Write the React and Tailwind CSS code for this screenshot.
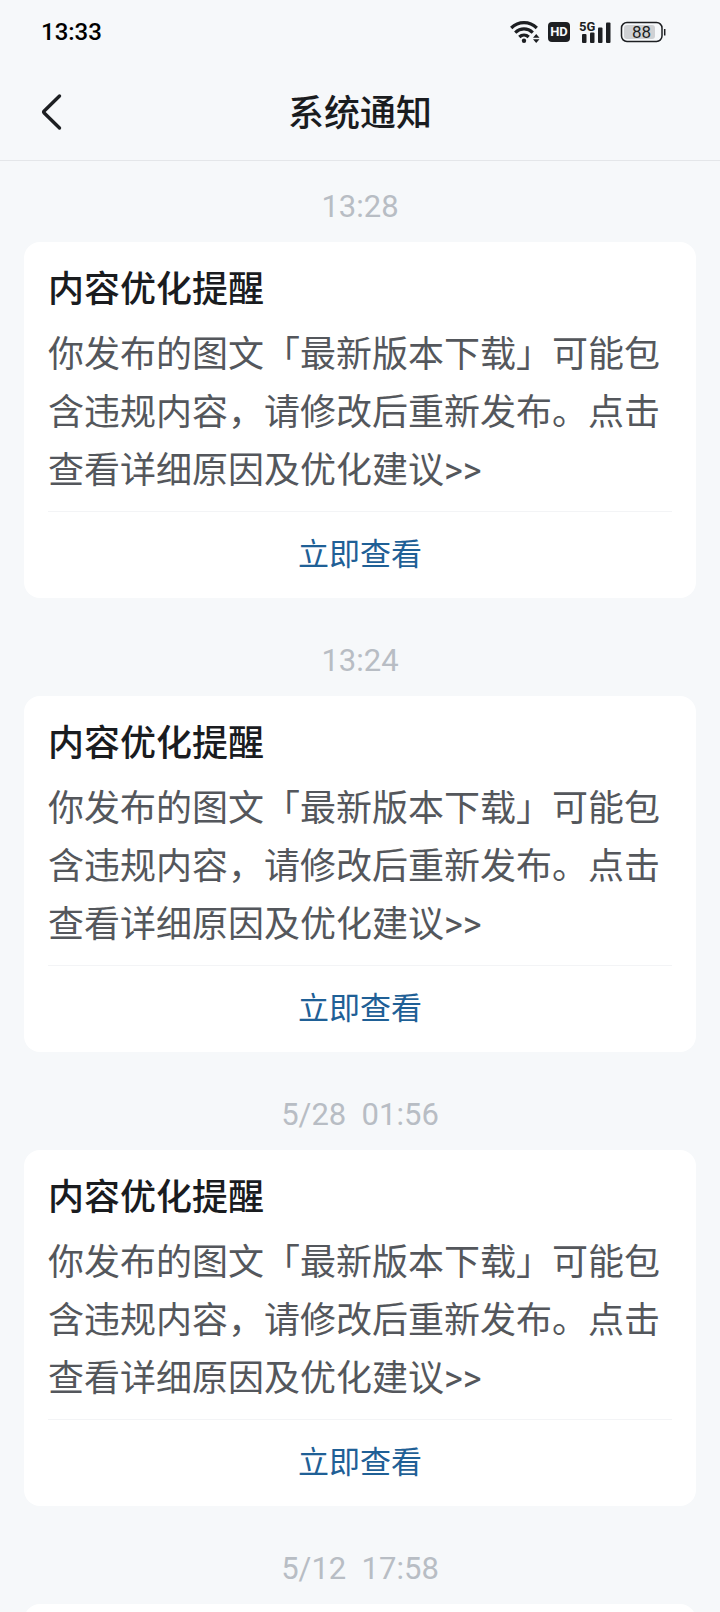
import React from 'react';

const detail = {
  title: '内容优化提醒',
  body: '你发布的图文「最新版本下载」可能包含违规内容，请修改后重新发布。点击查看详细原因及优化建议>>',
  action: '立即查看',
};

const notices = [
  { id: 1, time: '13:28', detail },
  { id: 2, time: '13:24', detail },
  { id: 3, time: '5/28  01:56', detail },
  { id: 4, time: '5/12  17:58', detail: null },
];

const WifiIcon = () => (
  <svg className="w-[30px] h-6" viewBox="0 0 30 24" fill="none" aria-hidden="true">
    <g stroke="#1d1f22" strokeWidth="3.2">
      <path d="M1.200 8C8.500 0.800 19.500 0.800 26.800 8" />
      <path d="M5.200 12.600C10.500 7.600 17.500 7.600 22.800 12.600" />
      <path d="M9.300 17C12 14.400 16 14.400 18.700 17" />
    </g>
    <circle cx="14" cy="20.700" r="2.200" fill="#1d1f22" />
    <path d="M23 17.700L26.200 14L29.500 17.700ZM23 19.200L26.200 22.900L29.500 19.200Z" fill="#1d1f22" />
  </svg>
);

const HdIcon = () => (
  <span className="flex items-center justify-center w-[22px] h-5 rounded bg-[#1d1f22] text-[#f6f8fa] text-[13px] leading-5 font-bold">
    HD
  </span>
);

const SignalIcon = () => (
  <svg className="w-[34px] h-8" viewBox="0 -4 34 32" aria-hidden="true">
    <g fill="#1d1f22">
      <text x="1" y="11" fontSize="13" fontWeight="700">5G</text>
      <rect x="4" y="14" width="4.500" height="9" rx="1" />
      <rect x="12" y="12.500" width="4.500" height="10.500" rx="1" />
      <rect x="20" y="7.500" width="4.500" height="15.500" rx="1" />
      <rect x="28" y="2.500" width="4.500" height="20.500" rx="1" />
    </g>
  </svg>
);

const BatteryIcon = () => (
  <svg className="w-[46px] h-6" viewBox="0 0 46 24" aria-hidden="true">
    <rect x="1.500" y="2.500" width="40.500" height="19" rx="5.500" fill="none" stroke="#1d1f22" strokeWidth="1.500" />
    <rect x="4" y="5" width="31" height="14" rx="3" fill="#cfd1d4" />
    <path d="M44.700 9V15.500" stroke="#1d1f22" strokeWidth="1.500" />
    <text x="21.500" y="18" fontSize="17" textAnchor="middle" fill="#1d1f22">88</text>
  </svg>
);

const StatusBar = () => (
  <div className="flex items-center justify-between h-16 pl-[41px] pr-[54px]">
    <span className="text-2xl font-medium text-black">13:33</span>
    <div className="flex items-center gap-2">
      <WifiIcon />
      <HdIcon />
      <SignalIcon />
      <BatteryIcon />
    </div>
  </div>
);

const Header = () => (
  <header className="relative flex items-center justify-center h-[97px] pt-[3px] border-b border-[#e4e6e9]">
    <button type="button" aria-label="返回" className="absolute left-10 top-7 w-10 h-10">
      <svg className="w-6 h-10" viewBox="0 0 24 40" fill="none" aria-hidden="true">
        <path
          d="M19.500 4L4.200 19Q3.200 20 4.200 21L19.500 36"
          stroke="#1d1f22"
          strokeWidth="3.4"
          strokeLinecap="round"
          strokeLinejoin="round"
        />
      </svg>
    </button>
    <h1 className="text-4xl font-medium text-[#1a1c1f]">系统通知</h1>
  </header>
);

const NoticeCard = ({ detail }) => (
  <article className="min-h-[356px] px-6 pt-6 rounded-2xl bg-white">
    {detail && (
      <>
        <h2 className="mb-3 text-4xl leading-12 font-medium text-[#1a1c1f]">{detail.title}</h2>
        <p className="mb-[11px] text-4xl leading-[58px] text-[#54575c]">{detail.body}</p>
        <a href="#detail" className="block border-t border-[#f3f4f6] text-center text-[31px] leading-[86px] text-[#1f6096]">
          {detail.action}
        </a>
      </>
    )}
  </article>
);

export default function App() {
  return (
    <div className="flex flex-col h-screen bg-[#f6f8fa] font-[Roboto,'Noto_Sans_CJK_SC',sans-serif]" lang="zh-CN">
      <StatusBar />
      <Header />
      <main className="flex-1 overflow-y-auto px-6 pt-[11px] [scrollbar-width:none]">
        {notices.map((notice) => (
          <section key={notice.id} className="mb-7">
            <time className="block py-[11px] text-center text-[31px] leading-12 whitespace-pre text-[#b8bdc4]">
              {notice.time}
            </time>
            <NoticeCard detail={notice.detail} />
          </section>
        ))}
      </main>
    </div>
  );
}
